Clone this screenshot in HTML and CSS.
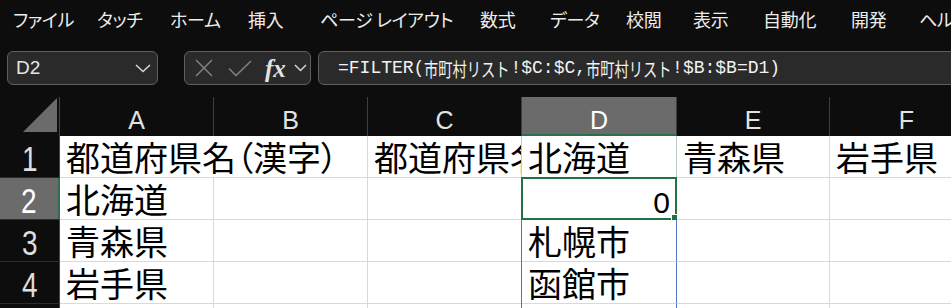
FILE: index.html
```html
<!doctype html>
<html lang="ja">
  <head>
    <meta charset="UTF-8" />
    <meta name="viewport" content="width=device-width, initial-scale=1.0" />
    <title>Excel - FILTER</title>
    <link rel="stylesheet" href="styles.css">
  </head>
  <body>
    <nav class="ribbon-tabs">
      <span>ファイル</span>
      <span>タッチ</span>
      <span>ホーム</span>
      <span>挿入</span>
      <span>ページ レイアウト</span>
      <span>数式</span>
      <span>データ</span>
      <span>校閲</span>
      <span>表示</span>
      <span>自動化</span>
      <span>開発</span>
      <span>ヘルプ</span>
    </nav>

    <div class="formula-bar">
      <div class="name-box">
        <span>D2</span>
        <svg width="16" height="9" viewBox="0 0 16 9">
          <path d="M1 1l7 6.5L15 1" fill="none" stroke="#d4d4d4" stroke-width="1.6" />
        </svg>
      </div>
      <svg class="grip" width="5" height="16" viewBox="0 0 5 16">
        <rect x="0" y="0" width="5" height="4" fill="#d8d8d8" />
        <rect x="0" y="6" width="5" height="4" fill="#d8d8d8" />
        <rect x="0" y="12" width="5" height="4" fill="#d8d8d8" />
      </svg>
      <div class="fx-box">
        <svg class="icon-cancel" width="18" height="18" viewBox="0 0 18 18">
          <path d="M1 1l16 16M17 1L1 17" fill="none" stroke="#7c7c7c" stroke-width="1.7" />
        </svg>
        <svg class="icon-enter" width="24" height="17" viewBox="0 0 24 17">
          <path d="M1 8.5l7 7L23 1" fill="none" stroke="#7c7c7c" stroke-width="1.7" />
        </svg>
        <span class="fx">fx</span>
        <svg class="icon-more" width="13" height="8" viewBox="0 0 13 8">
          <path d="M1 1l5.5 5.5L12 1" fill="none" stroke="#d4d4d4" stroke-width="1.5" />
        </svg>
      </div>
      <div class="formula-input">
        =FILTER(<span class="jp">市町村リスト</span>!$C:$C,<span class="jp">市町村リスト</span>!$B:$B=D1)
      </div>
    </div>

    <div class="sheet">
      <div class="corner">
        <svg width="60" height="39" viewBox="0 0 60 39">
          <polygon points="23,35 57,1 57,35" fill="#6b6b6b" />
        </svg>
      </div>
      <div class="col-head">A</div>
      <div class="col-head">B</div>
      <div class="col-head">C</div>
      <div class="col-head selected">D</div>
      <div class="col-head">E</div>
      <div class="col-head">F</div>

      <div class="row-head"><span>1</span></div>
      <div class="cell wide">都道府県名（漢字）</div>
      <div class="cell">都道府県名（ローマ字）</div>
      <div class="cell col-d">北海道</div>
      <div class="cell">青森県</div>
      <div class="cell">岩手県</div>

      <div class="row-head selected"><span>2</span></div>
      <div class="cell">北海道</div>
      <div class="cell"></div>
      <div class="cell"></div>
      <div class="cell active num"><span>0</span></div>
      <div class="cell"></div>
      <div class="cell"></div>

      <div class="row-head"><span>3</span></div>
      <div class="cell">青森県</div>
      <div class="cell"></div>
      <div class="cell"></div>
      <div class="cell spill">札幌市</div>
      <div class="cell"></div>
      <div class="cell"></div>

      <div class="row-head"><span>4</span></div>
      <div class="cell">岩手県</div>
      <div class="cell"></div>
      <div class="cell"></div>
      <div class="cell spill">函館市</div>
      <div class="cell"></div>
      <div class="cell"></div>

      <div class="row-head"><span>5</span></div>
      <div class="cell">宮城県</div>
      <div class="cell"></div>
      <div class="cell"></div>
      <div class="cell spill">小樽市</div>
      <div class="cell"></div>
      <div class="cell"></div>
    </div>
  </body>
</html>
```

FILE: styles.css
```css
* {
  box-sizing: border-box;
}
body {
  margin: 0;
  width: 951px;
  height: 308px;
  overflow: hidden;
  background-color: #0d0d0d;
  color: #ececec;
  font-family: "Noto Sans CJK JP", sans-serif;
}

/* Ribbon tabs */
.ribbon-tabs {
  display: grid;
  grid-template-columns: 84px 73px 78px 72px 160px 70px 76px 67px 70px 88px 68px 60px;
  align-items: center;
  height: 38px;
  padding-left: 13px;
  font-size: 18px;
  font-feature-settings: "palt";
  letter-spacing: -0.3px;
  white-space: nowrap;
  overflow: hidden;
}

/* Name box + formula bar */
.formula-bar {
  display: flex;
  align-items: flex-start;
  height: 48px;
  padding: 13px 0 0 7px;
}
.name-box,
.fx-box,
.formula-input {
  display: flex;
  align-items: center;
  flex-shrink: 0;
  height: 34px;
  border: 1px solid #5f5f5f;
  border-radius: 6px;
  background-color: #2a2a2a;
}
.name-box {
  width: 151px;
  justify-content: space-between;
  padding: 0 6px 0 8px;
  font-family: "Liberation Sans", sans-serif;
  font-size: 19px;
  color: #e6e6e6;
}
.grip {
  margin: 10px 0 0 13px;
}
.fx-box {
  width: 127px;
  margin-left: 13px;
  padding-left: 10px;
}
.icon-enter {
  margin-left: 15px;
}
.fx {
  margin-left: 13px;
  font-family: "Liberation Serif", serif;
  font-style: italic;
  font-weight: bold;
  font-size: 25px;
  line-height: 1;
  color: #e2e2e2;
}
.icon-more {
  margin-left: 8px;
}
.formula-input {
  width: 700px;
  margin-left: 7px;
  padding-left: 19px;
  font-family: "Liberation Mono", monospace;
  font-size: 18px;
  color: #f2f2f2;
  white-space: nowrap;
}
.formula-input .jp {
  display: inline-block;
  margin-right: -28px;
  font-family: "Noto Sans CJK JP", sans-serif;
  font-size: 19px;
  transform: scaleX(0.75);
  transform-origin: left center;
}

/* Worksheet grid */
.sheet {
  display: grid;
  grid-template-columns: 60px 154px 154px 154px 155px 153px 154px;
  grid-template-rows: 39px repeat(5, 42px);
  padding-top: 11px;
}
.corner {
  border-right: 1px solid #444;
}
.corner svg {
  display: block;
}
.col-head {
  padding-top: 8px;
  border-right: 1px solid #3e3e3e;
  font-family: "Liberation Sans", sans-serif;
  font-size: 25px;
  line-height: 31px;
  text-align: center;
  color: #e2e2e2;
}
.col-head.selected {
  background-color: #6b6b6b;
  border-bottom: 2px solid #2e6e4b;
  color: #fff;
}
.row-head {
  border-right: 1px solid #444;
  border-bottom: 1px solid #2c2c2c;
  font-size: 34px;
  line-height: 41px;
  text-align: center;
  color: #dedede;
}
.row-head span {
  display: inline-block;
  font-family: "Liberation Sans", sans-serif;
  font-size: 35px;
  transform: scaleX(0.8);
}
.row-head.selected {
  background-color: #6b6b6b;
  border-right: 2px solid #2e6e4b;
  color: #fff;
}
.cell {
  position: relative;
  overflow: hidden;
  padding: 0 6px;
  border-right: 1px solid #d9d9d9;
  border-bottom: 1px solid #d9d9d9;
  background-color: #fff;
  font-size: 34px;
  line-height: 41px;
  font-feature-settings: "palt";
  white-space: nowrap;
  color: #000;
}
.cell.wide {
  grid-column: span 2;
}
.cell.col-d {
  overflow: visible;
  border-right-color: #b9cfc2;
  box-shadow: -1px 0 0 #b9cfc2;
}
.cell.num {
  overflow: visible;
  text-align: right;
}
.cell.num span {
  font-family: "Liberation Sans", sans-serif;
  font-size: 30px;
}
.cell.active::before {
  content: "";
  position: absolute;
  top: -1px;
  left: -1px;
  right: -1px;
  bottom: -1px;
  border: 2px solid #217346;
}
.cell.active::after {
  content: "";
  position: absolute;
  right: -4px;
  bottom: -4px;
  width: 7px;
  height: 7px;
  background-color: #217346;
  border: 1px solid #fff;
}
.cell.spill {
  overflow: visible;
  border-right-color: #4f74c6;
  box-shadow: -1px 0 0 #4f74c6;
}
```
